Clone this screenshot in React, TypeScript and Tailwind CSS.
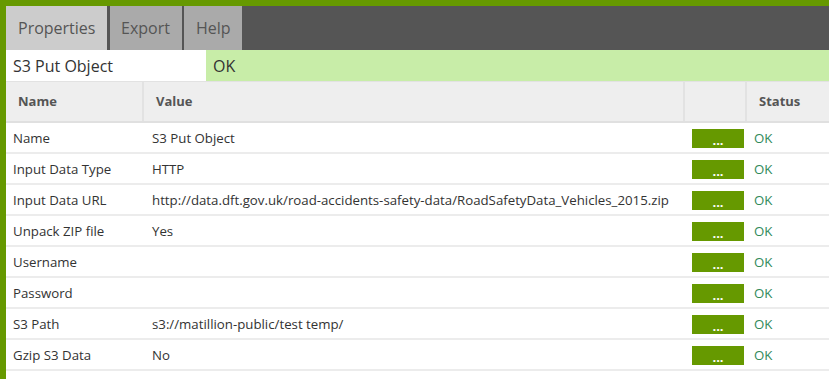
import React from "react";

const rows: [string, string][] = [
  ["Name", "S3 Put Object"],
  ["Input Data Type", "HTTP"],
  ["Input Data URL", "http://data.dft.gov.uk/road-accidents-safety-data/RoadSafetyData_Vehicles_2015.zip"],
  ["Unpack ZIP file", "Yes"],
  ["Username", ""],
  ["Password", ""],
  ["S3 Path", "s3://matillion-public/test temp/"],
  ["Gzip S3 Data", "No"],
];

export default function App() {
  return (
    <div
      className="w-[829px] h-[379px] overflow-hidden bg-white border-t-[6px] border-l-[6px] border-[#669900] flex flex-col"
      style={{ fontFamily: '"Open Sans", "Liberation Sans", sans-serif' }}
    >
      <div className="h-[44px] bg-[#555555] flex shrink-0">
        <div className="w-[101px] bg-[#cccccc] text-[#555] text-[16px] pl-[12px] flex items-center">Properties</div>
        <div className="w-[3px]" />
        <div className="w-[72px] bg-[#aaaaaa] text-[#555] text-[16px] pl-[11px] flex items-center">Export</div>
        <div className="w-[2px]" />
        <div className="w-[58px] bg-[#aaaaaa] text-[#555] text-[16px] pl-[12px] flex items-center">Help</div>
      </div>
      <div className="h-[32px] flex border-b border-[#e2e2e2] shrink-0">
        <div className="w-[200px] bg-white text-[#333] text-[16px] pl-[7px] flex items-center">S3 Put Object</div>
        <div className="flex-1 bg-[#c8eda8] text-[#333] text-[16px] pl-[7px] flex items-center">OK</div>
      </div>
      <div className="grid grid-cols-[138px_541px_62px_1fr] h-[41px] bg-[#eeeeee] border-b-2 border-[#e0e0e0] shrink-0 text-[13px] font-bold text-[#555]">
        <div className="pl-[12px] flex items-center border-r-2 border-[#e2e2e2]">Name</div>
        <div className="pl-[12px] flex items-center border-r-2 border-[#e2e2e2]">Value</div>
        <div className="border-r-2 border-[#e2e2e2]" />
        <div className="pl-[12px] flex items-center">Status</div>
      </div>
      {rows.map(([name, value]) => (
        <div
          key={name}
          className="grid grid-cols-[138px_541px_62px_1fr] h-[31px] border-b-2 border-[#ececec] pt-[2px] shrink-0 text-[13.25px] text-[#333]"
        >
          <div className="pl-[7px] flex items-center">{name}</div>
          <div className="pl-[8px] flex items-center whitespace-nowrap">{value}</div>
          <div className="pl-[7px] flex items-center">
            <div className="w-[52px] h-[19px] bg-[#669900] text-white text-[13px] font-bold flex items-end justify-center leading-[15px]">
              ...
            </div>
          </div>
          <div className="pl-[7px] flex items-center text-[#2f8a5a]">OK</div>
        </div>
      ))}
    </div>
  );
}
